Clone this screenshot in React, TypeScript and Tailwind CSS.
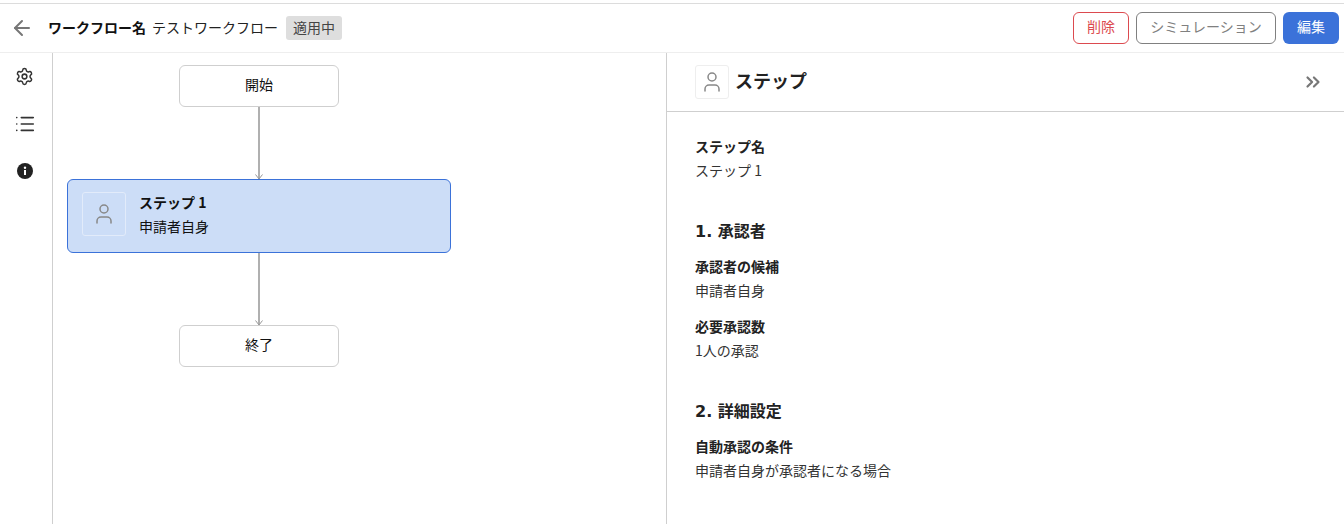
import { ArrowLeft, ChevronsRight, List, Settings, User } from "lucide-react";

function FlowLine() {
    return (
        <div className="relative h-[72px] w-0.5 bg-[#b0b0b0]">
            <svg
                className="absolute -bottom-px -left-[3px]"
                width="8"
                height="7"
                viewBox="0 0 8 7"
                fill="none"
                stroke="#999"
            >
                <path d="M.5 1.5L4 6l3.5-4.5" />
            </svg>
        </div>
    );
}

function TerminalNode({ label }: { label: string }) {
    return (
        <div className="flex h-[42px] w-40 items-center justify-center rounded-md border border-[#cfcfcf] bg-white pb-[5px] text-sm text-[#111]">
            {label}
        </div>
    );
}

function Field({ label, value }: { label: string; value: string }) {
    return (
        <div>
            <div className="text-sm leading-6 font-bold text-[#222]">{label}</div>
            <div className="text-sm leading-6 text-[#333]">{value}</div>
        </div>
    );
}

function SideIcon({ children }: { children: React.ReactNode }) {
    return <div className="flex h-[47px] items-center justify-center">{children}</div>;
}

export default function App() {
    return (
        <div className="flex h-[524px] w-[1344px] flex-col overflow-hidden bg-white pt-[3px] font-['Noto_Sans_CJK_JP','Noto_Sans',sans-serif]">
            <header className="flex h-[50px] shrink-0 items-center border-t border-b border-t-[#dcdcdc] border-b-[#eeeeee] pr-[5px] pl-[10px]">
                <ArrowLeft size={24} strokeWidth={2} className="text-[#777]" />
                <span className="ml-[14px] pb-[3px] text-sm font-bold text-[#111]">ワークフロー名</span>
                <span className="ml-[6px] pb-[3px] text-sm text-[#222]">テストワークフロー</span>
                <span className="ml-[8px] flex h-[24px] items-center rounded-[3px] bg-[#dedede] px-[7px] pb-[2px] text-sm text-[#444]">
                    適用中
                </span>
                <div className="ml-auto flex items-center gap-[7px]">
                    <button className="h-8 w-14 rounded-md border border-[#dc4a4f] pb-[5px] text-sm text-[#dc4a4f]">
                        削除
                    </button>
                    <button className="h-8 w-[140px] rounded-md border border-[#808080] pb-[5px] text-sm text-[#808080]">
                        シミュレーション
                    </button>
                    <button className="h-8 w-14 rounded-md bg-[#3b72d9] pb-[5px] text-sm text-white">
                        編集
                    </button>
                </div>
            </header>

            <div className="flex min-h-0 flex-1">
                <aside className="flex w-[53px] shrink-0 flex-col border-r border-[#cfcfcf] pr-[3px] text-[#333]">
                    <SideIcon>
                        <Settings size={19} strokeWidth={1.9} />
                    </SideIcon>
                    <SideIcon>
                        <List size={22} strokeWidth={1.8} />
                    </SideIcon>
                    <SideIcon>
                        <svg width="16" height="16" viewBox="0 0 16 16">
                            <circle cx="8" cy="8" r="8" fill="#222" />
                            <rect x="7" y="7" width="2" height="5" fill="#fff" />
                            <circle cx="8" cy="4.8" r="1.2" fill="#fff" />
                        </svg>
                    </SideIcon>
                </aside>

                <main className="w-[614px] shrink-0 border-r border-[#cfcfcf] pt-[12px] pl-[14px]">
                    <div className="flex w-[384px] flex-col items-center">
                        <TerminalNode label="開始" />
                        <FlowLine />
                        <div className="flex h-[74px] w-full items-start gap-[13px] rounded-md border border-[#3b72d9] bg-[#ccddf7] px-[14px] pt-[12px]">
                            <div className="flex size-[44px] items-center justify-center rounded-[3px] border border-[#e2ebfa]">
                                <User size={24} strokeWidth={1.5} className="text-[#888]" />
                            </div>
                            <div className="-mt-[2px]">
                                <div className="text-sm leading-6 font-bold text-[#111]">ステップ 1</div>
                                <div className="text-sm leading-6 text-[#111]">申請者自身</div>
                            </div>
                        </div>
                        <FlowLine />
                        <TerminalNode label="終了" />
                    </div>
                </main>

                <section className="min-w-0 flex-1">
                    <div className="flex h-[59px] items-center border-b border-[#cfcfcf] pr-[20px] pl-[28px]">
                        <div className="flex size-[34px] items-center justify-center rounded-[3px] border border-[#eeeeee]">
                            <User size={24} strokeWidth={1.5} className="text-[#888]" />
                        </div>
                        <h2 className="ml-[6px] pb-[5px] text-lg font-bold text-[#222]">ステップ</h2>
                        <ChevronsRight size={22} strokeWidth={2.4} className="ml-auto text-[#777]" />
                    </div>
                    <div className="px-[28px] pt-[22px]">
                        <Field label="ステップ名" value="ステップ 1" />
                        <h3 className="mt-[38px] font-['DejaVu_Sans','Noto_Sans_CJK_JP',sans-serif] text-base leading-6 font-bold text-[#222]">
                            1. 承認者
                        </h3>
                        <div className="mt-[10px] flex flex-col gap-3">
                            <Field label="承認者の候補" value="申請者自身" />
                            <Field label="必要承認数" value="1人の承認" />
                        </div>
                        <h3 className="mt-[38px] font-['DejaVu_Sans','Noto_Sans_CJK_JP',sans-serif] text-base leading-6 font-bold text-[#222]">
                            2. 詳細設定
                        </h3>
                        <div className="mt-[10px]">
                            <Field label="自動承認の条件" value="申請者自身が承認者になる場合" />
                        </div>
                    </div>
                </section>
            </div>
        </div>
    );
}
